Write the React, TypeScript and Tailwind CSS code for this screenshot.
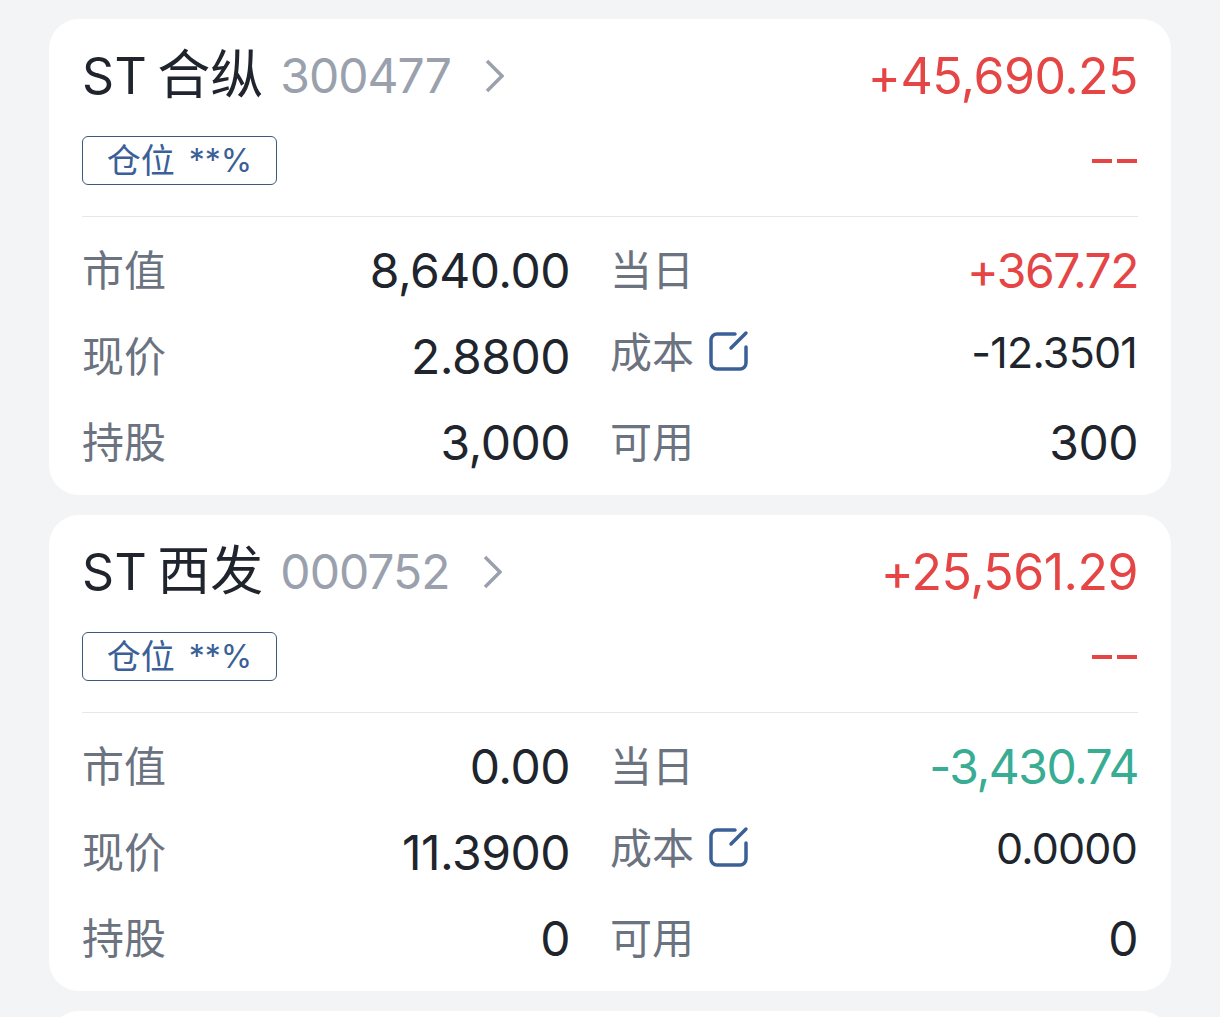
const FONT = "font-['Inter','Noto_Sans_CJK_SC',sans-serif]";

type Stock = {
  name: string;
  code: string;
  gain: string;
  marketValue: string;
  price: string;
  shares: string;
  today: string;
  todayColor: string;
  cost: string;
  available: string;
};

const stocks: Stock[] = [
  {
    name: "合纵",
    code: "300477",
    gain: "+45,690.25",
    marketValue: "8,640.00",
    price: "2.8800",
    shares: "3,000",
    today: "+367.72",
    todayColor: "text-[#e54545]",
    cost: "-12.3501",
    available: "300",
  },
  {
    name: "西发",
    code: "000752",
    gain: "+25,561.29",
    marketValue: "0.00",
    price: "11.3900",
    shares: "0",
    today: "-3,430.74",
    todayColor: "text-[#38ad93]",
    cost: "0.0000",
    available: "0",
  },
];

function EditIcon() {
  return (
    <svg width="40" height="42" viewBox="0 0 40 42" fill="none" stroke="#3b5f97" strokeWidth="3.5" strokeLinecap="round" className="ml-[15px] -mt-[2px]">
      <path d="M26 4H8a6 6 0 0 0-6 6v23a6 6 0 0 0 6 6h23a6 6 0 0 0 6-6V17" />
      <path d="M22 18L37 3" />
    </svg>
  );
}

function Row({ label, value, valueClass = "text-[#20252d]" }: { label: string; value: string; valueClass?: string }) {
  return (
    <div className="flex h-[86px] items-center justify-between">
      <span className="pb-[2px] text-[42px] text-[#6b7280]">{label}</span>
      <span className={`text-[48px] tracking-[-0.5px] ${valueClass}`}>{value}</span>
    </div>
  );
}

function StockCard({ stock }: { stock: Stock }) {
  return (
    <div className="rounded-[30px] bg-white px-[33px] pb-[9px]">
      {/* Title row */}
      <div className="flex h-[114px] items-center justify-between">
        <div className="flex items-center">
          <span className="text-[50px] tracking-[0.5px] text-[#20252d]">ST</span>
          <span className="ml-[10px] text-[53px] text-[#20252d]">{stock.name}</span>
          <span className="ml-[17px] text-[48px] tracking-[-1px] text-[#9aa1ad]">{stock.code}</span>
          <svg width="20" height="34" viewBox="0 0 20 34" fill="none" stroke="#9aa1ad" strokeWidth="3.5" className="ml-[33px]">
            <path d="M3 2l15 15L3 32" />
          </svg>
        </div>
        <span className="text-[50px] tracking-[-0.5px] text-[#e54545]">{stock.gain}</span>
      </div>

      {/* Position tag */}
      <div className="mt-[3px] flex items-center justify-between">
        <div className="flex h-[49px] w-[195px] items-center justify-center gap-[14px] rounded-[6px] border border-[#3c5a7d] text-[34px] leading-none text-[#3b5f97]">
          <span>仓位</span>
          <span className="text-[32px]">**%</span>
        </div>
        <div className="flex gap-[5px] pr-px">
          <div className="h-[4px] w-[20px] bg-[#e54545]" />
          <div className="h-[4px] w-[20px] bg-[#e54545]" />
        </div>
      </div>

      <div className="mt-[31px] h-px bg-[#e5e7eb]" />

      {/* Details */}
      <div className="mt-[11px] grid grid-cols-[488px_1fr] gap-x-[40px]">
        <Row label="市值" value={stock.marketValue} />
        <div className="flex h-[86px] items-center justify-between">
          <span className="pb-[2px] text-[42px] text-[#6b7280]">当日</span>
          <span className={`text-[48px] tracking-[-1.5px] ${stock.todayColor}`}>{stock.today}</span>
        </div>
        <Row label="现价" value={stock.price} />
        <div className="flex h-[86px] items-center justify-between pb-[10px]">
          <span className="flex items-center text-[42px] text-[#6b7280]">
            成本
            <EditIcon />
          </span>
          <span className="pr-px text-[43px] tracking-[-0.8px] text-[#20252d]">{stock.cost}</span>
        </div>
        <Row label="持股" value={stock.shares} />
        <div className="flex h-[86px] items-center justify-between">
          <span className="pb-[2px] text-[42px] text-[#6b7280]">可用</span>
          <span className="text-[48px] tracking-[-0.5px] text-[#20252d]">{stock.available}</span>
        </div>
      </div>
    </div>
  );
}

export default function App() {
  return (
    <div className={`h-[1017px] overflow-hidden bg-[#f3f4f6] px-[49px] pt-[19px] ${FONT}`}>
      <div className="flex flex-col gap-[20px]">
        {stocks.map((s) => (
          <StockCard key={s.code} stock={s} />
        ))}
        <div className="h-[100px] rounded-[30px] bg-white" />
      </div>
    </div>
  );
}
